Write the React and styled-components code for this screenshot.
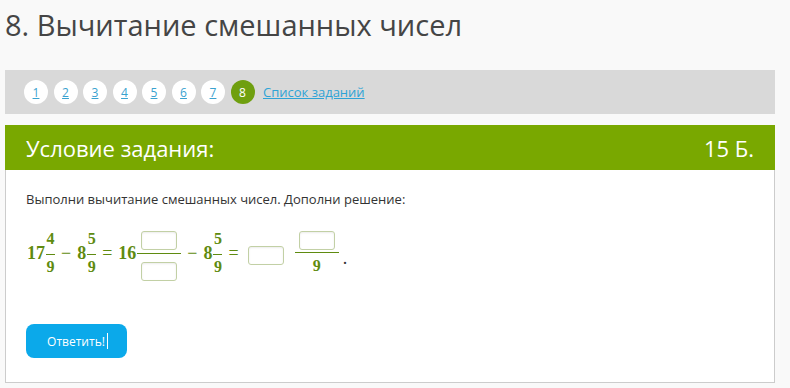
import React from 'react'
import styled, {createGlobalStyle} from 'styled-components';

const GlobalStyle = createGlobalStyle`
    body {
        margin: 0;
        background: #f9f9f9;
        font-family: "Open Sans", "Liberation Sans", sans-serif;
    }
`

const tasks = [1, 2, 3, 4, 5, 6, 7, 8];

// fraction: lineTop / lineBottom = space around the bar, pad = extra top padding to keep the bar centred
const Frac = ({top, bottom, wide, lineTop = 5, lineBottom = 2, pad = 0}) => (
    <FracWrap pad={pad}>
        <FracPart>{top}</FracPart>
        <FracLine wide={wide} lineTop={lineTop} lineBottom={lineBottom} />
        <FracPart>{bottom}</FracPart>
    </FracWrap>
)

const App = () => {
    return(
    <>
    <GlobalStyle />
    <Page>
        <Title>8. Вычитание смешанных чисел</Title>
        <Nav>
            {tasks.map((n) => (
                <Bubble key={n} active={n === 8}>
                    {n === 8 ? n : <a href="#">{n}</a>}
                </Bubble>
            ))}
            <ListLink href="#">Список заданий</ListLink>
        </Nav>
        <Card>
            <Header>
                <span>Условие задания:</span>
                <span>15 Б.</span>
            </Header>
            <Body>
                <Text>Выполни вычитание смешанных чисел. Дополни решение:</Text>
                <MathRow>
                    <Num>17</Num>
                    <Frac top="4" bottom="9" />
                    <Op>−</Op>
                    <Num>8</Num>
                    <Frac top="5" bottom="9" />
                    <Op>=</Op>
                    <Num>16</Num>
                    <Frac top={<Box />} bottom={<Box />} wide lineTop={2} lineBottom={8} pad={6} />
                    <Op>−</Op>
                    <Num>8</Num>
                    <Frac top="5" bottom="9" />
                    <Op>=</Op>
                    <Box mid />
                    <Frac top={<Box />} bottom="9" wide lineTop={2} lineBottom={3} />
                    <Dot>.</Dot>
                </MathRow>
                <Button>Ответить!<Caret /></Button>
            </Body>
        </Card>
    </Page>
    </>
    )
}

const Page = styled.div`
    width: 770px;
    padding: 0 5px;
`

const Title = styled.h1`
    margin: 0;
    height: 70px;
    padding-top: 3px;
    box-sizing: border-box;
    font-size: 29px;
    font-weight: 400;
    color: #454545;
    line-height: 44px;
`

const Nav = styled.div`
    height: 44px;
    background: #d9d9d9;
    display: flex;
    align-items: center;
    padding-left: 19px;
    gap: 5.5px;
`

const Bubble = styled.div`
    width: 24px;
    height: 24px;
    border-radius: 50%;
    background: ${(p) => (p.active ? '#6f9f0f' : '#fff')};
    color: #fff;
    display: flex;
    align-items: center;
    justify-content: center;
    font-size: 12px;
    a {
        color: #3aa2cf;
    }
`

const ListLink = styled.a`
    margin-left: 3px;
    color: #2ea3d6;
    font-size: 13px;
`

const Card = styled.div`
    margin-top: 11px;
    border: 1px solid #cccccc;
    border-top: none;
    background: #fff;
`

const Header = styled.div`
    height: 45px;
    background: #79a800;
    color: #fff;
    display: flex;
    align-items: center;
    justify-content: space-between;
    padding: 0 21px;
    margin: 0 -1px;
    font-size: 22px;
`

const Body = styled.div`
    padding: 20px 20px 24px;
`

const Text = styled.p`
    margin: 0;
    font-size: 13px;
    color: #333;
`

const MathRow = styled.div`
    display: flex;
    align-items: center;
    height: 68px;
    margin-top: 11px;
    font-family: "Liberation Serif", serif;
    font-weight: 700;
    font-size: 18px;
    color: #5f8b10;
`

const Num = styled.span`
    margin-left: 1px;
`

const Op = styled.span`
    margin: 0 5px;
    font-weight: 400;
    font-size: 18px;
`

const Dot = styled.span`
    margin-left: 3px;
    margin-top: 10px;
    font-weight: 400;
    color: #333;
`

const FracWrap = styled.span`
    display: inline-flex;
    flex-direction: column;
    align-items: center;
    padding: ${(p) => p.pad}px 1px 0;
    font-size: 16px;
`

const FracPart = styled.span`
    height: 20px;
    display: flex;
    align-items: center;
    line-height: 1;
`

const FracLine = styled.span`
    width: ${(p) => (p.wide ? '44px' : '9px')};
    height: 1px;
    background: #5f8b10;
    margin: ${(p) => p.lineTop}px 0 ${(p) => p.lineBottom}px;
`

const Box = styled.span`
    display: inline-block;
    width: 34px;
    height: 17px;
    border: 1px solid #c2d0a5;
    border-radius: 3px;
    background: #fff;
    box-shadow: inset 0 1px 2px rgba(0,0,0,0.08);
    margin: ${(p) => (p.mid ? '5px 10px 0 4px' : '0 4px')};
`

const Button = styled.button`
    margin-top: 37px;
    width: 101px;
    height: 34px;
    border: none;
    border-radius: 8px;
    background: #0ba9ea;
    color: #fff;
    font-family: "Open Sans", sans-serif;
    font-size: 12px;
    display: flex;
    align-items: center;
    justify-content: center;
    padding-left: 8px;
`

const Caret = styled.span`
    display: inline-block;
    width: 1px;
    height: 16px;
    background: #fff;
    margin-left: 2px;
`

export default App
